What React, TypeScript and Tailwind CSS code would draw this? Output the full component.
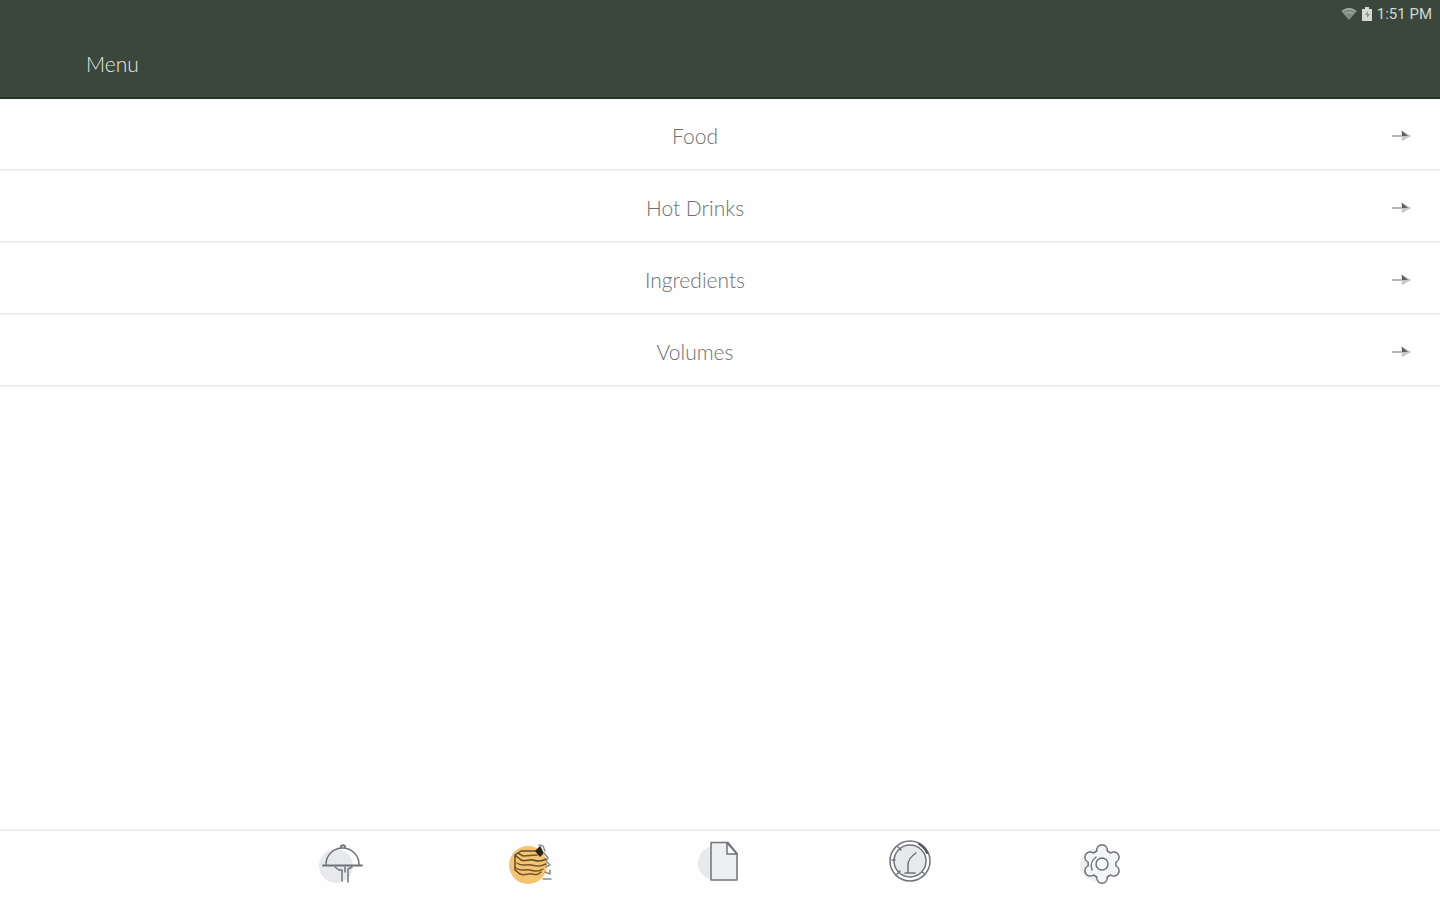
/**
 * Menu screen - category list with a bottom tab bar
 */

import { useState } from 'react';
import type { ReactNode } from 'react';

const categories = ['Food', 'Hot Drinks', 'Ingredients', 'Volumes'];

interface Tab {
  id: string;
  label: string;
  icon: ReactNode;
}

const tabs: Tab[] = [
  {
    id: 'service',
    label: 'Service',
    icon: (
      <>
        <circle cx="24" cy="30" r="17" fill="#e7e9ec" stroke="none" />
        <path d="M14 28.5a16.5 16.5 0 0 1 33 0" />
        <path d="M11 29.5h39M29 11c0-2.500 4-2.500 4 0" strokeWidth="2" />
        <path d="M23 31l4 3h3v11M33 31v5M36 46V33l4-2" />
      </>
    ),
  },
  {
    id: 'menu',
    label: 'Menu',
    icon: (
      <>
        <circle cx="26" cy="29" r="19" fill="#f5c470" stroke="none" />
        <path d="M34 15H19l-6 4v15l5 4M13 19l6 5c4 2 8-1 12 0s7 2 13-1" stroke="#5c4930" />
        <path d="M16 17l5 3 14-1M15 27c5 4 9 1 14 2s8 2 15-1M14 32c5 4 9 1 14 2s9 2 13-1M18 38c5 2 8-1 12 0s6 1 9-2" stroke="#705530" />
        <path d="M34 15l4-4 3 6-3 3z" fill="#28231e" stroke="#28231e" />
        <path d="M37 9l4 1 2 5M42 17l4 5-2 3 4 4-4 2M43 36l5 2v-4M41 43h8" stroke="#8b8e92" />
      </>
    ),
  },
  {
    id: 'documents',
    label: 'Documents',
    icon: (
      <>
        <circle cx="23" cy="27" r="17" fill="#e7e9ec" stroke="none" />
        <path d="M19 6.500h17l9 11V44H19z" fill="#eceef0" />
        <path d="M35 7v11h10z" fill="#fefefe" />
      </>
    ),
  },
  {
    id: 'clock',
    label: 'Clock',
    icon: (
      <>
        <circle cx="28" cy="25" r="20" />
        <circle cx="28" cy="25" r="16" fill="#e7e9ec" />
        <path d="M26 37v-8c0-4 2-8 8-12M23 37h10M16 11l3 3M10 24h3M15 38l3-3M40 36l3 2" />
        <path d="M37 8a19 19 0 0 1 8 9" strokeWidth="2" stroke="#4b4e53" />
      </>
    ),
  },
  {
    id: 'settings',
    label: 'Settings',
    icon: (
      <>
        <circle cx="24" cy="29" r="16" fill="#eceef0" stroke="none" />
        <path
          d="M24.800 15A5.300 5.300 0 1 1 35.200 15L38.600 17A5.300 5.300 0 1 1 43.900 26.100V29.900A5.300 5.300 0 1 1 38.600 39L35.200 41A5.300 5.300 0 1 1 24.800 41L21.400 39A5.300 5.300 0 1 1 16.100 29.900V26.100A5.300 5.300 0 1 1 21.400 17z"
          fill="#f4f5f6"
        />
        <circle cx="30" cy="28" r="6" />
        <path d="M20 34c-2-5 0-10 4-13" />
      </>
    ),
  },
];

function StatusBar() {
  return (
    <div className="flex h-7 items-center justify-end gap-1 pr-2 text-[#d3d9d4]">
      <svg className="h-4 w-4" viewBox="0 0 16 16" aria-hidden="true">
        <path d="M0 5C5 1 11 1 16 5L8 14z" fill="#7f8b81" />
        <path d="M2 5c4-3 8-3 12 0M4 8c3-2 6-2 8 0" stroke="#b5beb6" fill="none" />
      </svg>
      <svg className="h-4 w-3" viewBox="0 0 12 16" aria-hidden="true">
        <path d="M4 1h4v2h3v12H1V3h3z" fill="#d3d9d4" />
        <path d="M7 5l-3 4h2v3l3-4H7z" fill="#8b968d" />
      </svg>
      <span className="font-[Roboto,sans-serif] text-[15px]">1:51 PM</span>
    </div>
  );
}

function ArrowIcon() {
  return (
    <svg className="h-5 w-5" viewBox="0 0 20 20" fill="none" aria-hidden="true">
      <path d="M0 10h18" stroke="#b5b9b6" strokeWidth="2" />
      <path d="M9 4l10 6-9 5z" fill="#c3c7c4" />
      <path d="M10 5l6 5h-6z" fill="#59635b" />
    </svg>
  );
}

export default function App() {
  const [activeTab, setActiveTab] = useState('menu');

  return (
    <div className="flex min-h-screen flex-col bg-[#fefefe] font-[Lato,sans-serif]">
      {/* Header */}
      <header className="border-b-2 border-[#20352a] bg-[#3a473a]">
        <StatusBar />
        <h1 className="px-[86px] pt-[22px] pb-[19px] text-[21px] leading-7 font-light text-[#e4e9e4]">Menu</h1>
      </header>

      {/* Categories */}
      <main className="flex-1">
        <ul>
          {categories.map((category) => (
            <li key={category} className="border-b-2 border-[#ececec]">
              <button type="button" className="flex h-[70px] w-full items-center pt-1">
                <span className="flex-1 text-[21px] leading-7 font-light text-[#707070]">{category}</span>
                <span className="flex w-[50px] pl-[2px]">
                  <ArrowIcon />
                </span>
              </button>
            </li>
          ))}
        </ul>
      </main>

      {/* Tab bar */}
      <nav className="flex h-[71px] justify-center border-t-2 border-[#ececec] pt-[5px]">
        {tabs.map((tab) => (
          <button
            key={tab.id}
            type="button"
            aria-label={tab.label}
            aria-current={activeTab === tab.id ? 'page' : undefined}
            onClick={() => setActiveTab(tab.id)}
            className="flex w-[190px] items-start justify-center"
          >
            <svg
              className="h-14 w-14"
              viewBox="0 0 56 56"
              fill="none"
              stroke="#707378"
              strokeWidth="1.500"
              strokeLinecap="round"
              strokeLinejoin="round"
              aria-hidden="true"
            >
              {tab.icon}
            </svg>
          </button>
        ))}
      </nav>
    </div>
  );
}
